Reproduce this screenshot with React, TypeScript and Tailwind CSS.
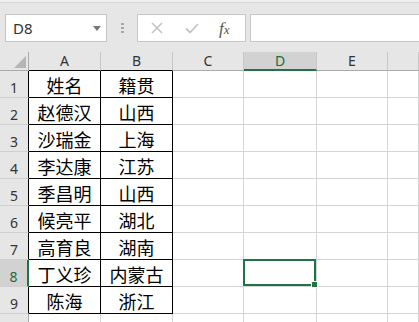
import React from 'react';

const rows: [string, string][] = [
  ['姓名', '籍贯'],
  ['赵德汉', '山西'],
  ['沙瑞金', '上海'],
  ['李达康', '江苏'],
  ['季昌明', '山西'],
  ['候亮平', '湖北'],
  ['高育良', '湖南'],
  ['丁义珍', '内蒙古'],
  ['陈海', '浙江'],
];

const cols = ['A', 'B', 'C', 'D', 'E', ''];

function FormulaBar() {
  return (
    <div className="h-[52px] bg-[#e6e6e6] flex flex-col">
      <div className="h-[3px] bg-[#efefef] border-b border-[#d6d6d6]"></div>
      <div className="flex items-start pt-[11px]">
        {/* name box */}
        <div className="ml-[5px] w-[102px] h-[28px] bg-white border border-[#c6c6c6] flex items-center justify-between pl-[7px] pr-[5px]">
          <span className="text-[15px] text-[#333] font-['Noto_Sans',sans-serif] leading-none">D8</span>
          <svg width="8" height="5" viewBox="0 0 8 5">
            <polygon points="0,0 8,0 4,5" fill="#777" />
          </svg>
        </div>
        <div className="ml-[14px] mt-[9px] flex flex-col gap-[2px]">
          <div className="w-[3px] h-[2px] bg-[#a8a8a8]"></div>
          <div className="w-[3px] h-[2px] bg-[#a8a8a8]"></div>
          <div className="w-[3px] h-[2px] bg-[#a8a8a8]"></div>
        </div>
        {/* cancel / enter / fx */}
        <div className="ml-[13px] w-[109px] h-[28px] bg-white border border-[#c6c6c6] flex items-center">
          <svg className="ml-[13px]" width="12" height="12" viewBox="0 0 12 12">
            <path d="M1 1 L11 11 M11 1 L1 11" stroke="#c4c4c4" strokeWidth="1.6" />
          </svg>
          <svg className="ml-[22px]" width="14" height="11" viewBox="0 0 14 11">
            <path d="M1 5.5 L5 9.5 L13 1" stroke="#c4c4c4" strokeWidth="1.8" fill="none" />
          </svg>
          <span className="ml-[20px] text-[17px] italic font-['Liberation_Serif',serif] text-[#555] leading-none">
            f<span className="text-[13px]">x</span>
          </span>
        </div>
        <div className="ml-[4px] flex-1 h-[28px] bg-white border-y border-l border-[#c6c6c6]"></div>
      </div>
    </div>
  );
}

export default function App() {
  return (
    <div className="w-[419px] h-[322px] overflow-hidden bg-white">
      <FormulaBar />

      <div className="grid grid-cols-[29px_72px_72px_71px_73px_71px_1fr] grid-rows-[19px_repeat(10,27px)] font-['Noto_Sans',sans-serif]">
        {/* corner */}
        <div className="bg-[#e6e6e6] border-r border-b border-[#ababab] flex items-end justify-end pr-[2px] pb-[2px]">
          <svg width="12" height="12" viewBox="0 0 12 12">
            <polygon points="12,0 12,12 0,12" fill="#b5b5b5" />
          </svg>
        </div>

        {/* column headers */}
        {cols.map((c, i) => {
          const selected = c === 'D';
          const boxed = i < 2;
          return (
            <div
              key={'h' + i}
              className={
                'flex items-center justify-center text-[14px] leading-none border-r border-[#c8c8c8] ' +
                (selected
                  ? 'bg-[#d2d2d2] text-[#1e6b3e] border-b-2 border-b-[#217346]'
                  : boxed
                  ? 'bg-[#e6e6e6] text-[#333] border-b border-b-black'
                  : 'bg-[#e6e6e6] text-[#333] border-b border-b-[#ababab]')
              }
            >
              {c}
            </div>
          );
        })}

        {/* rows */}
        {Array.from({ length: 10 }).map((_, r) => {
          const n = r + 1;
          const data = rows[r];
          const isSel = n === 8;
          return (
            <React.Fragment key={'r' + n}>
              <div
                className={
                  'flex items-end justify-center pb-[2px] text-[14px] leading-none border-b border-[#d0d0d0] ' +
                  (isSel
                    ? 'bg-[#d2d2d2] text-[#1e6b3e] border-r-2 border-r-[#217346]'
                    : data
                    ? 'bg-[#e6e6e6] text-[#333] border-r border-r-black'
                    : 'bg-[#e6e6e6] text-[#333] border-r border-r-[#ababab]')
                }
              >
                {n}
              </div>
              {cols.map((c, i) => {
                const val = data && i < 2 ? data[i] : null;
                const boxed = data && i < 2;
                const selCell = isSel && c === 'D';
                return (
                  <div
                    key={'c' + n + i}
                    className={
                      'flex items-center justify-center pt-[2px] text-[18px] leading-none text-black font-["Noto_Sans_CJK_SC",sans-serif] ' +
                      (boxed ? 'border-r border-b border-black' : 'border-r border-b border-[#d4d4d4]') +
                      (selCell ? ' relative' : '')
                    }
                  >
                    {val}
                    {selCell && (
                      <>
                        <div className="absolute z-10 -left-[1px] -top-[1px] right-0 bottom-0 border-2 border-[#217346]"></div>
                        <div className="absolute z-20 -right-[2px] -bottom-[2px] w-[7px] h-[7px] bg-[#217346] border border-white"></div>
                      </>
                    )}
                  </div>
                );
              })}
            </React.Fragment>
          );
        })}
      </div>
    </div>
  );
}
